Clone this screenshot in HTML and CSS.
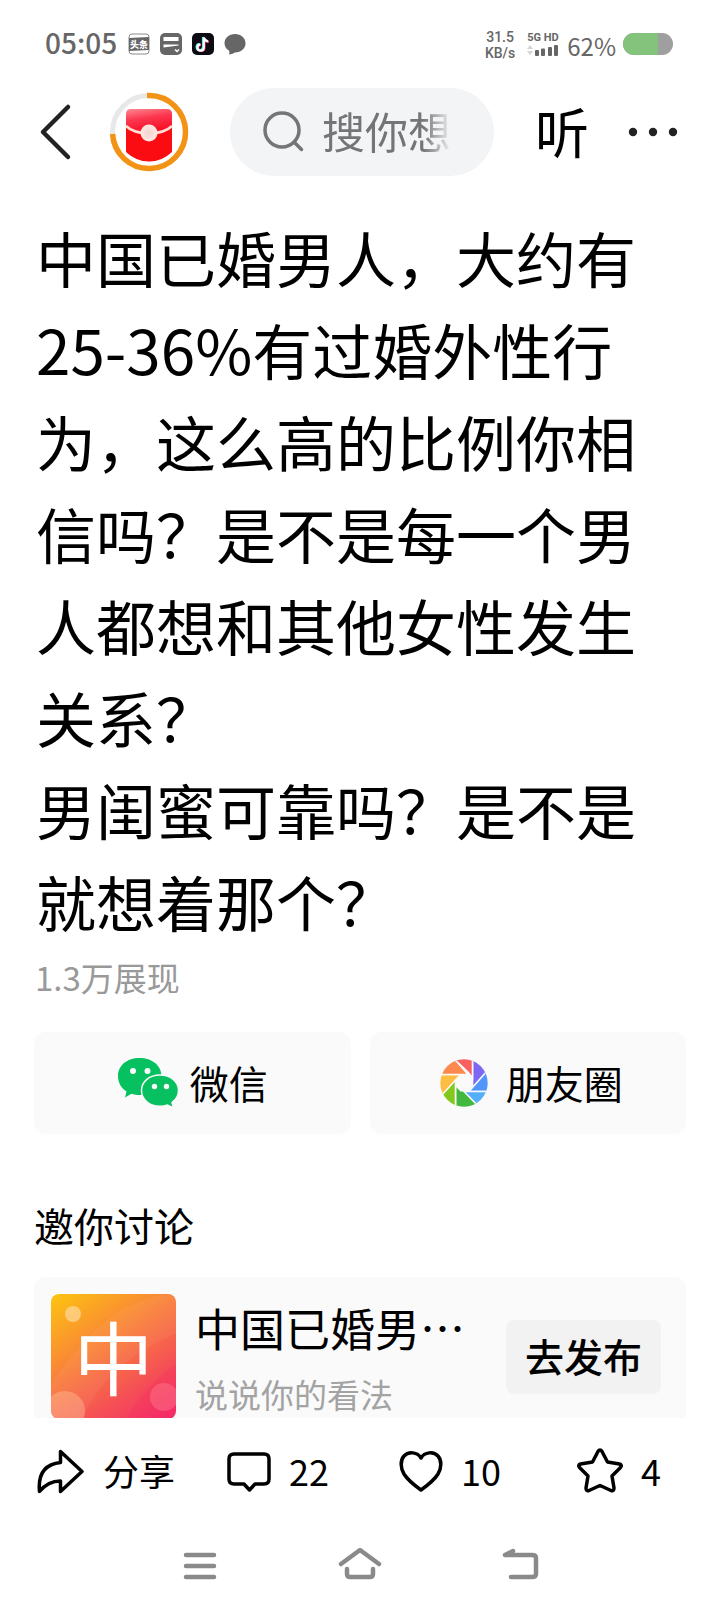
FILE: index.html
```html
<!DOCTYPE html>
<html lang="zh-CN">
<head>
<meta charset="utf-8">
<meta name="viewport" content="width=device-width, initial-scale=1">
<title>微头条</title>
<link rel="stylesheet" href="styles.css">
</head>
<body>
<div class="app">
  <div class="status">
    <span class="status-time">05:05</span>
    <div class="status-apps">
      <svg width="22" height="22" viewBox="0 0 22 22"><rect x="1" y="1" width="20" height="20" rx="3" fill="#fff" stroke="#8a8a8a"/><path d="M1 5L21 4V17L1 18Z" fill="#666"/><text x="11" y="15" text-anchor="middle" class="toutiao">头条</text></svg>
      <svg width="22" height="22" viewBox="0 0 22 22"><rect width="22" height="22" rx="5" fill="#666"/><path d="M3.500 4H18.500V8H3.500ZM3.500 11.500H18.500V12.500L3.500 14.500Z" fill="#fff"/><path d="M15 16.500L17 18.500L19 16.500" fill="none" stroke="#fff" stroke-width="1.5"/></svg>
      <svg width="22" height="22" viewBox="0 0 22 22"><rect width="22" height="22" rx="5" fill="#0c0b14"/><g fill="none" stroke-width="2.2"><path d="M11 4V14A3.2 3.2 0 1 1 7.500 10.800M11 4Q12 7.500 15.500 8" stroke="#25f4ee"/><path d="M12.500 5V15A3.200 3.200 0 1 1 9 11.600M12.500 5Q13 8.500 17 9" stroke="#fe2c55"/><path d="M11.800 4.500V14.500A3.200 3.200 0 1 1 8.300 11.300M11.800 4.500Q12.500 8 16.200 8.500" stroke="#fff"/></g></svg>
      <svg width="22" height="22" viewBox="0 0 22 22"><path d="M11 1C17 1 21.500 5 21.500 10.200S17 19.500 11 19.500C8 21 7 21 5 21.500C5.500 20 5.500 19 5 17.500C2 16 .5 13 .5 10.200C.5 5 5 1 11 1Z" fill="#666"/></svg>
    </div>
    <div class="status-right">
      <div class="status-speed"><span>31.5</span><span>KB/s</span></div>
      <div class="status-net">
        <span>5G HD</span>
        <svg width="32" height="12" viewBox="0 0 32 12"><path d="M0 5L3 1L6 5ZM0 7L3 11L6 7Z" fill="#d5d5d5"/><g fill="#666"><rect x="8" y="6" width="4" height="6" rx="1"/><rect x="14" y="4.500" width="4" height="7.500" rx="1"/><rect x="21" y="3" width="4" height="9" rx="1"/><rect x="27" y="1" width="4" height="11" rx="1"/></g></svg>
      </div>
      <span class="status-percent">62%</span>
      <div class="battery"><div class="battery-level" style="width:70%"></div></div>
    </div>
  </div>

  <header class="header">
    <button class="icon-button back" aria-label="返回"><svg width="34" height="58" viewBox="0 0 34 58"><path d="M30 4L5 29L30 54" fill="none" stroke="#222" stroke-width="4.500" stroke-linecap="round" stroke-linejoin="round"/></svg></button>
    <button class="icon-button reward" aria-label="红包">
      <svg width="80" height="80" viewBox="0 0 80 80">
        <defs>
          <linearGradient id="flap" x1="0" y1="0" x2="0.300" y2="1"><stop offset="0" stop-color="#ff8a92"/><stop offset=".45" stop-color="#fb3850"/><stop offset="1" stop-color="#f90f25"/></linearGradient>
          <radialGradient id="pearl"><stop offset="0" stop-color="#f3d2d0"/><stop offset="1" stop-color="#ffe9e2"/></radialGradient>
        </defs>
        <circle cx="40" cy="40" r="36.500" fill="none" stroke="#e8e8e8" stroke-width="5"/>
        <path d="M38 3.500H40A36.500 36.500 0 1 1 3.600 42" fill="none" stroke="#f39315" stroke-width="5.500"/>
        <path d="M17 30H63V60Q53 69.500 40 69.500T17 60Z" fill="#fb0b12"/>
        <path d="M17 22Q17 17 22 17H58Q63 17 63 22V35Q53 41 40 41T17 35Z" fill="url(#flap)"/>
        <path d="M17 34Q24 41 40 41.500Q56 41 63 34" fill="none" stroke="#ffe0d5" stroke-width="2.500"/>
        <circle cx="40" cy="41" r="8.500" fill="url(#pearl)"/>
      </svg>
    </button>
    <label class="search">
      <svg width="44" height="44" viewBox="0 0 44 44"><g fill="none" stroke="#747577" stroke-width="3.500" stroke-linecap="round"><circle cx="20" cy="20" r="17"/><path d="M32 32L39.500 39.500"/></g></svg>
      <input class="search-input" type="text" aria-label="搜索" placeholder="搜你想">
    </label>
    <button class="icon-button listen">听</button>
    <button class="icon-button more" aria-label="更多"><svg width="50" height="10" viewBox="0 0 50 10"><g fill="#222"><circle cx="5" cy="5" r="4.200"/><circle cx="25" cy="5" r="4.200"/><circle cx="45" cy="5" r="4.200"/></g></svg></button>
  </header>

  <main class="content">
    <article class="post">
      <p>中国已婚男人，大约有<span class="figure">25-36%</span>有过婚外性行为，这么高的比例你相信吗？是不是每一个男人都想和其他女性发生关系？</p>
      <p>男闺蜜可靠吗？是不是就想着那个？</p>
    </article>
    <div class="views">1.3万展现</div>
    <div class="share-row">
      <button class="share">
        <svg width="62" height="52" viewBox="0 0 62 52"><path d="M22.500 1C35 1 44.500 8.500 44.500 19S35 38 22.500 38C19.500 38 17 37.500 14.500 36.700L8 40.500L9.500 34.500C4 31 1 25.500 1 19C1 8.500 10 1 22.500 1Z" fill="#07c160"/><path d="M43 18C53.500 18 61.500 24.500 61.500 33.500C61.500 38.500 59 42.500 55 45.500L56.500 51L50.500 48C48 49 46 49.300 43 49.300C32.500 49.300 24.500 42.500 24.500 33.500S32.500 18 43 18Z" fill="#07c160" stroke="#fafafa" stroke-width="1.500"/><g fill="#fafafa"><circle cx="16" cy="14" r="3"/><circle cx="30.500" cy="14" r="3"/><circle cx="37.500" cy="29.500" r="2.700"/><circle cx="49.500" cy="29.500" r="2.700"/></g></svg>
        <span>微信</span>
      </button>
      <button class="share">
        <svg width="62" height="52" viewBox="0 0 62 52">
          <defs><clipPath id="lens"><circle cx="31" cy="26" r="23.700"/></clipPath></defs>
          <g clip-path="url(#lens)" stroke="#fafafa" stroke-width="1.600">
            <path d="M39.500 0L60 12L54 17L39.500 31V18Z" fill="#7d68f4"/>
            <path d="M54 14L64 20V34.500H36L39 31Z" fill="#5295fb"/>
            <path d="M64 34.500V40L48 54L28 34.500Z" fill="#55aff8"/>
            <path d="M48 52H22.500V24.500L31 34.500Z" fill="#42b83f"/>
            <path d="M22.500 54L0 48L8 38L22.500 23V34Z" fill="#83c81c"/>
            <path d="M8 39L0 34V17.500H28L22.500 23Z" fill="#fdbd43"/>
            <path d="M0 17.500L12 -1L20 0L35 17.500Z" fill="#fd8950"/>
            <path d="M20 0H39.500V21L35 15L20 1Z" fill="#f9605f"/>
          </g>
          <path d="M27.500 17.500H34.500L39.500 22.500V29.500L34.500 34.500H27.500L22.500 29.500V22.500Z" fill="#fafafa"/>
        </svg>
        <span>朋友圈</span>
      </button>
    </div>
    <h2 class="invite">邀你讨论</h2>
    <section class="topic">
      <div class="thumb">
        <svg class="thumb-art" viewBox="0 0 125 125" aria-hidden="true"><path d="M0 90Q60 0 125 0V40Q60 65 30 125H0Z" fill="#fff" opacity=".05"/><path d="M75 125Q95 90 125 70V125Z" fill="#f20070" opacity=".1"/><circle cx="22" cy="20" r="8" fill="#ffdca8" opacity=".65"/><circle cx="14" cy="117" r="20" fill="#ffc39c" opacity=".4"/><circle cx="113" cy="103" r="14" fill="#ff8d9a" opacity=".35"/></svg>
        <span>中</span>
      </div>
      <div class="topic-text">
        <h3 class="topic-title">中国已婚男…</h3>
        <p class="topic-sub">说说你的看法</p>
      </div>
      <button class="publish">去发布</button>
    </section>
  </main>

  <footer class="actions">
    <button class="action"><svg width="50" height="46" viewBox="0 0 50 46"><path d="M24.500 3.500L46 23.500L24.500 43.500V33Q12 33 3.500 43.500Q1 17 24.500 14.500Z"/></svg><span>分享</span></button>
    <button class="action"><svg width="46" height="46" viewBox="0 0 46 46"><path d="M8 6H38Q43 6 43 11V31Q43 36 38 36H29L23.500 42L18 36H8Q3 36 3 31V11Q3 6 8 6Z"/></svg><span>22</span></button>
    <button class="action"><svg width="46" height="46" viewBox="0 0 46 46"><path d="M23 10C19.500 4 10.500 3 6 8C2 12.500 2.500 20 6 26C10 32.500 16 37 23 42C30 37 36 32.500 40 26C43.500 20 44 12.500 40 8C35.500 3 26.500 4 23 10Z"/></svg><span>10</span></button>
    <button class="action"><svg width="48" height="46" viewBox="0 0 48 46"><path d="M22 3.500Q24 .5 26 3.500L31.500 14L43.500 16Q46.500 17 44.500 19.500L36 28L38 40Q38 43.500 35 42.500L24 37.500L13 42.500Q10 43.500 10 40L12 28L3.500 19.500Q1.500 17 4.500 16L16.500 14Z"/></svg><span>4</span></button>
  </footer>

  <nav class="nav">
    <button class="icon-button" aria-label="最近任务"><svg width="44" height="36" viewBox="0 0 44 36"><path d="M8 7H36M8 18H36M8 29H36"/></svg></button>
    <button class="icon-button" aria-label="主页"><svg width="44" height="36" viewBox="0 0 44 36"><path d="M3 16L22 2L41 16M9 21V26Q9 29 12 29H32Q35 29 35 26V21"/></svg></button>
    <button class="icon-button" aria-label="返回上一页"><svg width="44" height="36" viewBox="0 0 44 36"><path d="M15 3L7 7H34Q38 7 38 10V26Q38 29 34 29H13"/></svg></button>
  </nav>
</div>
</body>
</html>
```
FILE: styles.css
```css
* {
  box-sizing: border-box;
}

body {
  margin: 0;
  background: #fff;
  color: #000;
  font-family: "Noto Sans CJK SC", sans-serif;
}

button {
  border: 0;
  padding: 0;
  background: none;
  color: inherit;
  font: inherit;
}

svg {
  display: block;
  flex-shrink: 0;
}

h2,
h3,
p {
  margin: 0;
  font-weight: 400;
}

.app {
  display: flex;
  flex-direction: column;
  height: 100vh;
}

.status {
  display: flex;
  align-items: center;
  flex-shrink: 0;
  height: 88px;
  padding: 0 47px 0 45px;
  color: #666;
}

.status-time {
  font-size: 28px;
  font-weight: 500;
  line-height: 40px;
  padding-bottom: 4px;
}

.status-apps {
  display: flex;
  gap: 10px;
  margin-left: 11px;
}

.toutiao {
  fill: #fff;
  font-size: 9px;
  font-weight: 900;
}

.status-right {
  display: flex;
  align-items: center;
  margin-left: auto;
}

.status-speed {
  display: grid;
  justify-items: center;
  padding-top: 2px;
  font: 500 14px/16px Roboto, sans-serif;
}

.status-net {
  margin-left: 12px;
  font: 700 11px/12px Roboto, sans-serif;
}

.status-percent {
  margin-left: 8px;
  padding-top: 4px;
  font-size: 24px;
  line-height: 28px;
}

.battery {
  width: 50px;
  height: 22px;
  margin-left: 7px;
  border-radius: 11px;
  background: #a09fa0;
  overflow: hidden;
}

.battery-level {
  height: 100%;
  background: #83c37c;
}

.header {
  display: flex;
  align-items: center;
  flex-shrink: 0;
  height: 88px;
  padding: 0 42px 0 38px;
}

.icon-button {
  display: flex;
  align-items: center;
  justify-content: center;
}

.reward {
  margin-left: 37px;
}

.search {
  display: flex;
  align-items: center;
  flex: 1;
  min-width: 0;
  height: 88px;
  margin-left: 41px;
  padding: 0 42px 0 32px;
  border-radius: 44px;
  background: #f3f4f6;
}

.search-input {
  flex: 1;
  width: 0;
  min-width: 0;
  height: 60px;
  margin-left: 16px;
  padding: 0 0 4px;
  border: 0;
  outline: 0;
  background: none;
  color: #747577;
  font: 43px/56px "Noto Sans CJK SC", sans-serif;
  -webkit-mask-image: linear-gradient(to right, #000 78%, transparent);
  mask-image: linear-gradient(to right, #000 78%, transparent);
}

.search-input::placeholder {
  color: #747577;
  opacity: 1;
}

.listen {
  margin-left: 41px;
  padding-bottom: 2px;
  font-size: 54px;
  line-height: 80px;
}

.more {
  margin-left: 39px;
}

.content {
  flex: 1;
  min-height: 0;
  padding: 35px 34px 0;
  overflow-y: auto;
  scrollbar-width: none;
}

.post {
  padding-left: 2px;
  font-size: 60px;
  line-height: 92px;
}

.figure {
  font-size: 62px;
  line-height: 1;
}

.views {
  margin-top: 5px;
  padding-left: 1px;
  color: #999;
  font-size: 33px;
  line-height: 50px;
}

.share-row {
  display: grid;
  grid-template-columns: 1fr 1fr;
  gap: 19px;
  margin-top: 30px;
}

.share {
  display: flex;
  align-items: center;
  justify-content: center;
  gap: 11px;
  height: 102px;
  border-radius: 12px;
  background: #fafafa;
  font-size: 39px;
  line-height: 60px;
}

.share span {
  padding-bottom: 2px;
}

.invite {
  margin-top: 61px;
  font-size: 40px;
  line-height: 60px;
}

.topic {
  display: flex;
  align-items: flex-start;
  margin-top: 22px;
  padding: 17px 25px 17px 17px;
  border-radius: 12px;
  background: #fafafa;
}

.thumb {
  display: grid;
  flex-shrink: 0;
  width: 125px;
  height: 125px;
  border-radius: 8px;
  background: linear-gradient(145deg, #fdc50f, #f98339 40%, #f54b58 75%, #f42c69);
  color: #fff;
  font-size: 80px;
  line-height: 120px;
  text-align: center;
  overflow: hidden;
}

.thumb > * {
  grid-area: 1 / 1;
}

.thumb-art {
  width: 100%;
  height: 100%;
}

.topic-text {
  flex: 1;
  min-width: 0;
  margin-left: 19px;
  padding-top: 4px;
}

.topic-title {
  font-size: 45px;
  line-height: 60px;
  white-space: nowrap;
}

.topic-sub {
  margin-top: 12px;
  color: #a3a3a3;
  font-size: 33px;
  line-height: 48px;
}

.publish {
  flex-shrink: 0;
  margin-top: 26px;
  padding: 5px 19px 9px;
  border-radius: 8px;
  background: #f2f2f2;
  font-size: 39px;
  font-weight: 500;
  line-height: 60px;
}

.actions {
  display: grid;
  grid-template-columns: 190fr 172fr 178fr 110fr;
  align-items: center;
  flex-shrink: 0;
  height: 106px;
  padding: 0 34px 0 36px;
}

.action {
  display: flex;
  align-items: center;
  gap: 17px;
  font-size: 36px;
  line-height: 54px;
}

.action span {
  padding-bottom: 2px;
}

.action svg {
  fill: none;
  stroke: #000;
  stroke-width: 3.5;
  stroke-linejoin: round;
}

.nav {
  display: grid;
  grid-template-columns: repeat(3, 160px);
  justify-content: center;
  flex-shrink: 0;
  height: 84px;
}

.nav svg {
  fill: none;
  stroke: #8a8a8a;
  stroke-width: 4.5;
  stroke-linecap: round;
  stroke-linejoin: round;
}
```
